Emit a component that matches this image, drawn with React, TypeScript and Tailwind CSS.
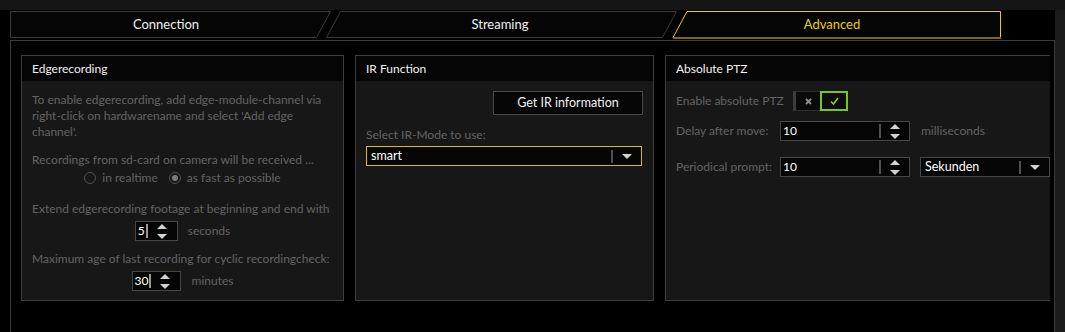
import React from "react";

// ─── Small drawings ───────────────────────────────────────────────────────────

function TriUp({ color = "#d2d2d2" }: { color?: string }) {
  return (
    <svg width="10" height="5" viewBox="0 0 10 5">
      <polygon points="0,5 5,0 10,5" fill={color} />
    </svg>
  );
}

function TriDown({ color = "#d2d2d2" }: { color?: string }) {
  return (
    <svg width="10" height="5" viewBox="0 0 10 5">
      <polygon points="0,0 10,0 5,5" fill={color} />
    </svg>
  );
}

function Arrows() {
  return (
    <div className="flex w-[28px] shrink-0 flex-col items-center justify-center gap-[5px]">
      <TriUp />
      <TriDown />
    </div>
  );
}

// ─── Inputs ───────────────────────────────────────────────────────────────────

function Spinner({
  value,
  width,
  sepColor = "#505050",
  grow = false,
}: {
  value: string;
  width: string;
  sepColor?: string;
  grow?: boolean;
}) {
  return (
    <div
      className={`flex h-[20px] shrink-0 items-center border border-[#464646] bg-[#050505] ${width}`}
    >
      <span
        className={`pl-[2px] pr-[1px] text-[12px] leading-none text-white ${grow ? "flex-1" : ""}`}
      >
        {value}
      </span>
      <div className="h-[14px] w-[2px] shrink-0" style={{ backgroundColor: sepColor }} />
      <Arrows />
    </div>
  );
}

function Combo({
  value,
  width,
  border,
}: {
  value: string;
  width: string;
  border: string;
}) {
  return (
    <div className={`flex h-[20px] shrink-0 items-center border bg-[#050505] ${border} ${width}`}>
      <span className="flex-1 pl-[4px] text-[12.5px] leading-none text-white">{value}</span>
      <div className="h-[13px] w-[2px] shrink-0 bg-[#505050]" />
      <div className="flex w-[28px] shrink-0 items-center justify-center">
        <TriDown />
      </div>
    </div>
  );
}

function Radio({ checked, label }: { checked?: boolean; label: string }) {
  return (
    <div className="flex items-center gap-[6px]">
      <span className="flex h-[12px] w-[12px] items-center justify-center rounded-full border border-[#505050]">
        {checked && <span className="h-[6px] w-[6px] rounded-full bg-[#7a7a7a]" />}
      </span>
      <span>{label}</span>
    </div>
  );
}

function Toggle() {
  return (
    <div className="flex h-[20px] shrink-0">
      <div className="flex w-[27px] items-center justify-center border-y border-l-[3px] border-[#2e2e2e] border-l-[#3c3c3c] bg-[#0a0a0a]">
        <svg width="7" height="7" viewBox="0 0 7 7">
          <path d="M1 1 L6 6 M6 1 L1 6" stroke="#8c8c8c" strokeWidth="1.8" />
        </svg>
      </div>
      <div className="flex w-[28px] items-center justify-center border-2 border-[#7cc41f] bg-[#0d0d0d]">
        <svg width="9" height="8" viewBox="0 0 9 8">
          <path d="M1 4.5 L3.5 7 L8 1" stroke="#8ccc2e" strokeWidth="1.6" fill="none" />
        </svg>
      </div>
    </div>
  );
}

// ─── Group box ────────────────────────────────────────────────────────────────

function GroupBox({
  title,
  width,
  className = "",
  children,
}: {
  title: string;
  width: string;
  className?: string;
  children: React.ReactNode;
}) {
  return (
    <div className={`flex h-[246px] shrink-0 flex-col border border-[#3e3e3e] ${width} ${className}`}>
      <div className="flex h-[25px] items-center bg-[#050505] px-[10px] text-[12px] text-[#f2f2f2]">
        {title}
      </div>
      <div className="flex-1 bg-[#171717] px-[10px] text-[12px] leading-[16px] text-[#646464]">
        {children}
      </div>
    </div>
  );
}

// ─── Tabs ─────────────────────────────────────────────────────────────────────

function TabStrip() {
  return (
    <div className="relative h-[30px] shrink-0">
      {/* tab outlines */}
      <svg className="absolute inset-0" width="1055" height="30" viewBox="0 0 1055 30">
        <polygon
          points="10.5,1.5 330.5,1.5 316.5,27.5 10.5,27.5"
          fill="#050505"
          stroke="#3a3a3a"
        />
        <polygon
          points="340.5,1.5 676.5,1.5 662.5,27.5 326.5,27.5"
          fill="#050505"
          stroke="#3a3a3a"
        />
        <polygon points="687,1.5 1000.5,1.5 1000.5,28 673,28" fill="#050505" />
        <path d="M673 27.5 L687 1.5 L1000.5 1.5 L1000.5 28" fill="none" stroke="#efcf00" />
        <line x1="673" y1="28" x2="1001" y2="28" stroke="#7d6c00" strokeWidth="2" />
      </svg>
      <div className="relative flex h-[28px] items-center pl-[10px] pt-[2px] text-[13px]">
        <div className="w-[312px] text-center text-[#f2f2f2]">Connection</div>
        <div className="w-[356px] text-center text-[#f2f2f2]">Streaming</div>
        <div className="w-[308px] text-center text-[#e8d000]">Advanced</div>
      </div>
    </div>
  );
}

// ─── Main ─────────────────────────────────────────────────────────────────────

export default function App() {
  return (
    <div
      className="h-[332px] w-[1065px] overflow-hidden bg-[#1c1c1c]"
      style={{ fontFamily: "Lato, 'Noto Sans', sans-serif" }}
    >
      <div className="h-[10px] bg-[#151515]" />
      <div className="flex h-[322px] w-[1055px] flex-col bg-black">
        <TabStrip />
        <div className="ml-[10px] flex w-[1045px] flex-1 gap-[11px] overflow-hidden border-x border-t border-[#3c3c3c] pl-[10px] pt-[14px]">
          {/* Edgerecording */}
          <GroupBox title="Edgerecording" width="w-[323px]">
            <div className="whitespace-nowrap pt-[11px]">
              <p>To enable edgerecording, add edge-module-channel via</p>
              <p>right-click on hardwarename and select 'Add edge</p>
              <p>channel'.</p>
              <p className="mt-[12px]">Recordings from sd-card on camera will be received ...</p>
              <div className="mt-[2px] flex justify-center gap-[11px]">
                <Radio label="in realtime" />
                <Radio checked label="as fast as possible" />
              </div>
              <p className="mt-[15px]">Extend edgerecording footage at beginning and end with</p>
              <div className="mt-[4px] flex items-center justify-center gap-[10px]">
                <Spinner value="5" width="w-[43px]" sepColor="#9a9a9a" />
                <span>seconds</span>
              </div>
              <p className="mt-[10px]">Maximum age of last recording for cyclic recordingcheck:</p>
              <div className="mt-[4px] flex items-center justify-center gap-[11px]">
                <Spinner value="30" width="w-[49px]" sepColor="#9a9a9a" />
                <span>minutes</span>
              </div>
            </div>
          </GroupBox>

          {/* IR Function */}
          <GroupBox title="IR Function" width="w-[299px]">
            <div className="flex flex-col pt-[10px]">
              <button className="flex h-[24px] w-[150px] items-center justify-center self-end border border-[#4a4a4a] bg-[#060606] text-[12.5px] text-[#f2f2f2]">
                Get IR information
              </button>
              <p className="mt-[12px]">Select IR-Mode to use:</p>
              <div className="mt-[3px]">
                <Combo value="smart" width="w-[276px]" border="border-[#dcbe00]" />
              </div>
            </div>
          </GroupBox>

          {/* Absolute PTZ */}
          <GroupBox title="Absolute PTZ" width="w-[385px]" className="border-r-0">
            <div className="whitespace-nowrap pt-[10px]">
              <div className="flex items-center">
                <span className="w-[117px] shrink-0">Enable absolute PTZ</span>
                <Toggle />
              </div>
              <div className="mt-[10px] flex items-center">
                <span className="w-[104px] shrink-0">Delay after move:</span>
                <Spinner value="10" width="w-[130px]" grow />
                <span className="ml-[11px] shrink-0">milliseconds</span>
              </div>
              <div className="mt-[16px] flex items-center">
                <span className="w-[104px] shrink-0">Periodical prompt:</span>
                <Spinner value="10" width="w-[130px]" grow />
                <div className="ml-[10px] shrink-0">
                  <Combo value="Sekunden" width="w-[130px]" border="border-[#464646]" />
                </div>
              </div>
            </div>
          </GroupBox>
        </div>
      </div>
    </div>
  );
}
